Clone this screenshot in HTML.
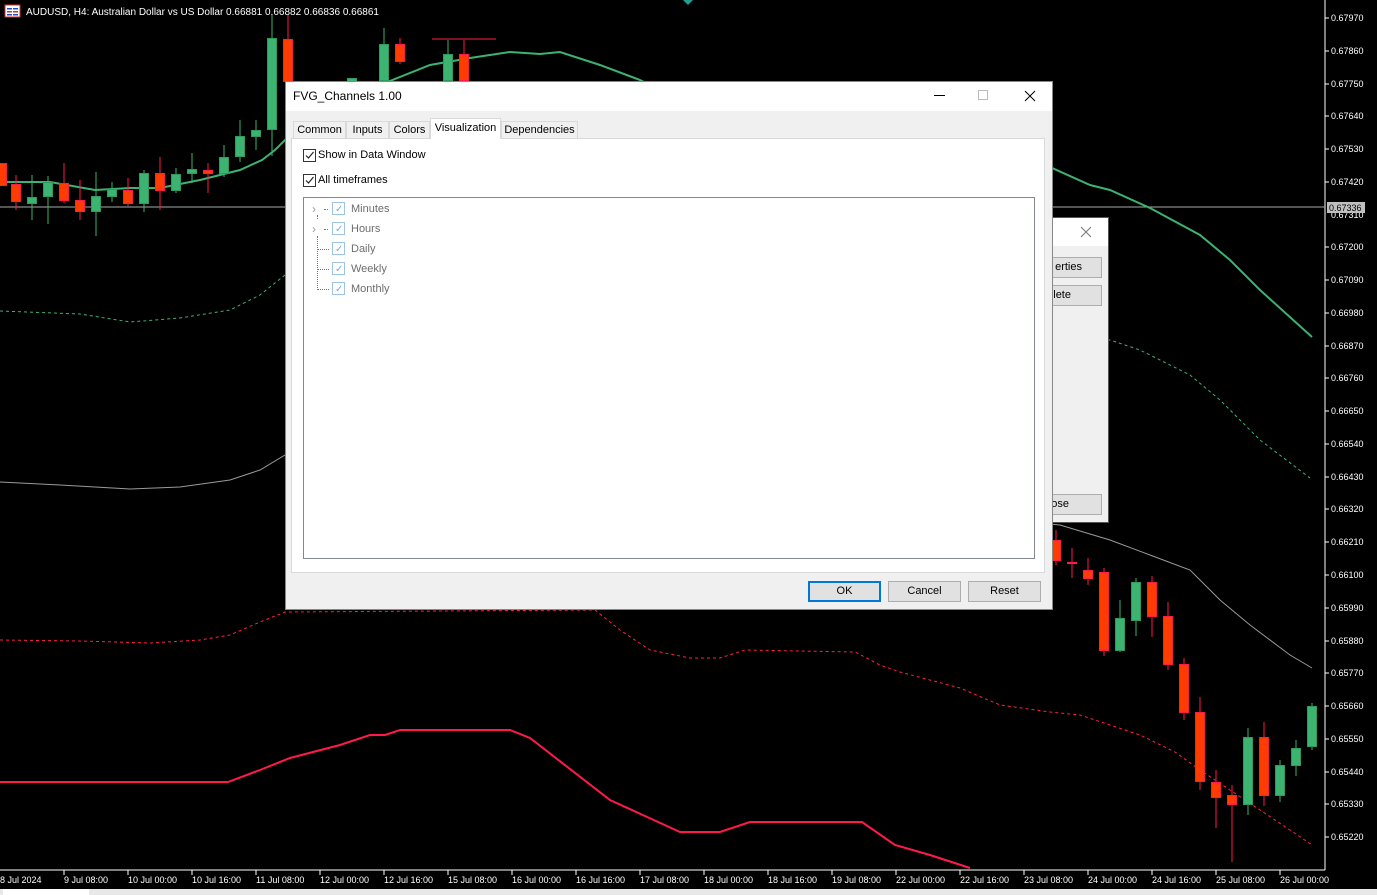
<!DOCTYPE html>
<html><head><meta charset="utf-8"><style>
*{margin:0;padding:0;box-sizing:border-box}
body{width:1377px;height:895px;background:#000;position:relative;overflow:hidden;font-family:"Liberation Sans",sans-serif}
svg{position:absolute;left:0;top:0}
.dlg{position:absolute;background:#f0f0f0;border:1px solid #888;font-size:11px;color:#000}
.btn{position:absolute;height:21px;background:#e1e1e1;border:1px solid #adadad;font-size:11px;text-align:center;line-height:19px}
.tab{position:absolute;top:121px;height:18px;border:1px solid #d9d9d9;border-bottom:none;background:#f0f0f0;font-size:11px;line-height:16px;text-align:center}
.cb{position:absolute;width:13px;height:13px;border:1px solid #333;background:#fff}
.cb2{position:absolute;width:13px;height:13px;border:1px solid #9dc3e6;background:#fff}
.gl{position:absolute;font-size:11px;color:#6d6d6d}
</style></head><body>
<svg width="1377" height="895" viewBox="0 0 1377 895">
<g font-family="Liberation Sans" font-size="9" fill="#fff">
<line x1="1325" y1="0" x2="1325" y2="870" stroke="#fff"/>
<line x1="0" y1="870" x2="1325" y2="870" stroke="#fff"/>
<line x1="0" y1="207" x2="1325" y2="207" stroke="#aaa"/>
<g stroke="#fff">
<line x1="1325" x2="1329" y1="18" y2="18"/><line x1="1325" x2="1329" y1="51" y2="51"/><line x1="1325" x2="1329" y1="84" y2="84"/><line x1="1325" x2="1329" y1="116" y2="116"/><line x1="1325" x2="1329" y1="149" y2="149"/><line x1="1325" x2="1329" y1="182" y2="182"/><line x1="1325" x2="1329" y1="247" y2="247"/><line x1="1325" x2="1329" y1="280" y2="280"/><line x1="1325" x2="1329" y1="313" y2="313"/><line x1="1325" x2="1329" y1="346" y2="346"/><line x1="1325" x2="1329" y1="378" y2="378"/><line x1="1325" x2="1329" y1="411" y2="411"/><line x1="1325" x2="1329" y1="444" y2="444"/><line x1="1325" x2="1329" y1="477" y2="477"/><line x1="1325" x2="1329" y1="509" y2="509"/><line x1="1325" x2="1329" y1="542" y2="542"/><line x1="1325" x2="1329" y1="575" y2="575"/><line x1="1325" x2="1329" y1="608" y2="608"/><line x1="1325" x2="1329" y1="641" y2="641"/><line x1="1325" x2="1329" y1="673" y2="673"/><line x1="1325" x2="1329" y1="706" y2="706"/><line x1="1325" x2="1329" y1="739" y2="739"/><line x1="1325" x2="1329" y1="772" y2="772"/><line x1="1325" x2="1329" y1="804" y2="804"/><line x1="1325" x2="1329" y1="837" y2="837"/>
</g>
<g>
<text x="1331" y="21">0.67970</text><text x="1331" y="54">0.67860</text><text x="1331" y="87">0.67750</text><text x="1331" y="119">0.67640</text><text x="1331" y="152">0.67530</text><text x="1331" y="185">0.67420</text><text x="1331" y="218">0.67310</text><text x="1331" y="250">0.67200</text><text x="1331" y="283">0.67090</text><text x="1331" y="316">0.66980</text><text x="1331" y="349">0.66870</text><text x="1331" y="381">0.66760</text><text x="1331" y="414">0.66650</text><text x="1331" y="447">0.66540</text><text x="1331" y="480">0.66430</text><text x="1331" y="512">0.66320</text><text x="1331" y="545">0.66210</text><text x="1331" y="578">0.66100</text><text x="1331" y="611">0.65990</text><text x="1331" y="644">0.65880</text><text x="1331" y="676">0.65770</text><text x="1331" y="709">0.65660</text><text x="1331" y="742">0.65550</text><text x="1331" y="775">0.65440</text><text x="1331" y="807">0.65330</text><text x="1331" y="840">0.65220</text>
</g>
<rect x="1327" y="202" width="38" height="11" fill="#c0c0c0"/><text x="1329" y="211" fill="#000">0.67336</text>
<g stroke="#fff">
<line x1="64" x2="64" y1="870" y2="875"/><line x1="128" x2="128" y1="870" y2="875"/><line x1="192" x2="192" y1="870" y2="875"/><line x1="256" x2="256" y1="870" y2="875"/><line x1="320" x2="320" y1="870" y2="875"/><line x1="384" x2="384" y1="870" y2="875"/><line x1="448" x2="448" y1="870" y2="875"/><line x1="512" x2="512" y1="870" y2="875"/><line x1="576" x2="576" y1="870" y2="875"/><line x1="640" x2="640" y1="870" y2="875"/><line x1="704" x2="704" y1="870" y2="875"/><line x1="768" x2="768" y1="870" y2="875"/><line x1="832" x2="832" y1="870" y2="875"/><line x1="896" x2="896" y1="870" y2="875"/><line x1="960" x2="960" y1="870" y2="875"/><line x1="1024" x2="1024" y1="870" y2="875"/><line x1="1088" x2="1088" y1="870" y2="875"/><line x1="1152" x2="1152" y1="870" y2="875"/><line x1="1216" x2="1216" y1="870" y2="875"/><line x1="1280" x2="1280" y1="870" y2="875"/>
</g>
<g>
<text x="0" y="883">8 Jul 2024</text><text x="64" y="883">9 Jul 08:00</text><text x="128" y="883">10 Jul 00:00</text><text x="192" y="883">10 Jul 16:00</text><text x="256" y="883">11 Jul 08:00</text><text x="320" y="883">12 Jul 00:00</text><text x="384" y="883">12 Jul 16:00</text><text x="448" y="883">15 Jul 08:00</text><text x="512" y="883">16 Jul 00:00</text><text x="576" y="883">16 Jul 16:00</text><text x="640" y="883">17 Jul 08:00</text><text x="704" y="883">18 Jul 00:00</text><text x="768" y="883">18 Jul 16:00</text><text x="832" y="883">19 Jul 08:00</text><text x="896" y="883">22 Jul 00:00</text><text x="960" y="883">22 Jul 16:00</text><text x="1024" y="883">23 Jul 08:00</text><text x="1088" y="883">24 Jul 00:00</text><text x="1152" y="883">24 Jul 16:00</text><text x="1216" y="883">25 Jul 08:00</text><text x="1280" y="883">26 Jul 00:00</text>
</g>
</g>
<rect x="0" y="889" width="1377" height="6" fill="#e8e8e8"/><rect x="3" y="889" width="86" height="6" fill="#fff"/>
<g fill="none">
<polyline stroke="#3cb371" stroke-width="2" points="0,182 50,182 95,190 130,188 160,188 200,180 240,170 262,160 275,150 285,140 330,110 380,85 430,65 470,58 510,52 540,54 560,52 600,65 640,80 680,100 1052,168 1090,185 1110,190 1150,208 1200,235 1230,260 1260,290 1312,337"/>
<polyline stroke="#3cb371" stroke-dasharray="3,3" points="0,311 80,314 130,322 180,318 230,310 260,295 285,275 1110,340 1140,350 1190,375 1220,400 1260,440 1310,478"/>
<polyline stroke="#9a9a9a" points="0,482 60,485 130,489 180,487 230,480 260,470 285,455 1060,525 1110,540 1150,555 1190,570 1220,600 1250,625 1290,655 1312,668"/>
<polyline stroke="#ff2040" stroke-dasharray="3,3" points="0,640 80,641 150,643 200,640 230,635 260,622 285,612 595,610 620,630 650,650 690,658 720,658 745,650 855,652 880,665 900,672 960,688 1000,705 1050,712 1080,715 1110,725 1140,735 1175,752 1200,770 1230,790 1260,810 1290,830 1312,845"/>
<polyline stroke="#ff1a4a" stroke-width="2" points="0,782 228,782 260,770 290,758 340,745 370,735 385,735 400,730 510,730 530,738 610,800 680,832 720,832 750,822 862,822 895,845 930,855 970,868"/>
<line x1="432" y1="39" x2="496" y2="39" stroke="#ff2040"/>
</g>
<g stroke-width="1">
<g stroke="#3cb371"><line x1="32" y1="175" x2="32" y2="220"/><line x1="48" y1="176" x2="48" y2="224"/><line x1="96" y1="172" x2="96" y2="236"/><line x1="112" y1="182" x2="112" y2="202"/><line x1="144" y1="170" x2="144" y2="212"/><line x1="176" y1="168" x2="176" y2="193"/><line x1="192" y1="153" x2="192" y2="183"/><line x1="224" y1="145" x2="224" y2="177"/><line x1="240" y1="120" x2="240" y2="162"/><line x1="256" y1="120" x2="256" y2="150"/><line x1="272" y1="14" x2="272" y2="156"/><line x1="384" y1="28" x2="384" y2="80"/><line x1="448" y1="40" x2="448" y2="80"/><line x1="1120" y1="600" x2="1120" y2="652"/><line x1="1136" y1="578" x2="1136" y2="636"/><line x1="1248" y1="728" x2="1248" y2="815"/><line x1="1280" y1="760" x2="1280" y2="802"/><line x1="1296" y1="740" x2="1296" y2="776"/><line x1="1312" y1="703" x2="1312" y2="750"/></g>
<g stroke="#ff1a4a"><line x1="16" y1="175" x2="16" y2="210"/><line x1="64" y1="163" x2="64" y2="203"/><line x1="80" y1="180" x2="80" y2="220"/><line x1="128" y1="178" x2="128" y2="206"/><line x1="160" y1="157" x2="160" y2="210"/><line x1="208" y1="163" x2="208" y2="193"/><line x1="288" y1="14" x2="288" y2="81"/><line x1="400" y1="38" x2="400" y2="64"/><line x1="464" y1="40" x2="464" y2="80"/><line x1="1056" y1="530" x2="1056" y2="565"/><line x1="1072" y1="548" x2="1072" y2="578"/><line x1="1088" y1="558" x2="1088" y2="585"/><line x1="1104" y1="568" x2="1104" y2="656"/><line x1="1152" y1="576" x2="1152" y2="637"/><line x1="1168" y1="602" x2="1168" y2="670"/><line x1="1184" y1="658" x2="1184" y2="720"/><line x1="1200" y1="697" x2="1200" y2="790"/><line x1="1216" y1="770" x2="1216" y2="828"/><line x1="1232" y1="785" x2="1232" y2="862"/><line x1="1264" y1="722" x2="1264" y2="806"/></g>
</g>
<g fill="#3cb371" stroke="#2e9a5e">
<rect x="27.5" y="197.5" width="9" height="6"/><rect x="43.5" y="182.5" width="9" height="14"/><rect x="91.5" y="196.5" width="9" height="15"/><rect x="107.5" y="189.5" width="9" height="7"/><rect x="139.5" y="173.5" width="9" height="30"/><rect x="171.5" y="174.5" width="9" height="16"/><rect x="187.5" y="169.5" width="9" height="4"/><rect x="219.5" y="157.5" width="9" height="16"/><rect x="235.5" y="136.5" width="9" height="20"/><rect x="251.5" y="130.5" width="9" height="6"/><rect x="267.5" y="38.5" width="9" height="91"/><rect x="347.5" y="78.5" width="9" height="3"/><rect x="379.5" y="44.5" width="9" height="36"/><rect x="443.5" y="54.5" width="9" height="26"/>
<rect x="1115.5" y="618.5" width="9" height="32"/><rect x="1131.5" y="582.5" width="9" height="38"/><rect x="1243.5" y="737.5" width="9" height="67"/><rect x="1275.5" y="765.5" width="9" height="30"/><rect x="1291.5" y="748.5" width="9" height="17"/><rect x="1307.5" y="706.5" width="9" height="40"/>
</g>
<g fill="#ff3c00" stroke="#ff1a4a">
<rect x="-4.5" y="163.5" width="11" height="22"/><rect x="11.5" y="184.5" width="9" height="17"/><rect x="59.5" y="183.5" width="9" height="17"/><rect x="75.5" y="200.5" width="9" height="11"/><rect x="123.5" y="190.5" width="9" height="13"/><rect x="155.5" y="173.5" width="9" height="17"/><rect x="203.5" y="170.5" width="9" height="3"/><rect x="283.5" y="39.5" width="9" height="42"/><rect x="395.5" y="44.5" width="9" height="17"/><rect x="459.5" y="54.5" width="9" height="26"/>
<rect x="1051.5" y="540.5" width="9" height="20"/><rect x="1067.5" y="562.5" width="9" height="1"/><rect x="1083.5" y="570.5" width="9" height="8"/><rect x="1099.5" y="572.5" width="9" height="78"/><rect x="1147.5" y="582.5" width="9" height="34"/><rect x="1163.5" y="616.5" width="9" height="48"/><rect x="1179.5" y="664.5" width="9" height="48"/><rect x="1195.5" y="712.5" width="9" height="69"/><rect x="1211.5" y="782.5" width="9" height="15"/><rect x="1227.5" y="795.5" width="9" height="9"/><rect x="1259.5" y="737.5" width="9" height="58"/>
</g>
<polygon points="683,0 693,0 688,5" fill="#20a090"/>
<rect x="5" y="5" width="15" height="12" fill="#fff" stroke="#d03030"/>
<rect x="7" y="8" width="5" height="1.5" fill="#2050c0"/><rect x="13" y="8" width="5" height="1.5" fill="#2050c0"/><rect x="7" y="11" width="5" height="1.5" fill="#d03030"/><rect x="13" y="11" width="5" height="1.5" fill="#d03030"/><rect x="7" y="14" width="5" height="1.5" fill="#2050c0"/><rect x="13" y="14" width="5" height="1.5" fill="#2050c0"/>
<text x="26" y="15" font-family="Liberation Sans" font-size="10" fill="#fff">AUDUSD, H4:  Australian Dollar vs US Dollar  0.66881 0.66882 0.66836 0.66861</text>
</svg>

<div class="dlg" style="left:1040px;top:217px;width:69px;height:306px;border-color:#555">
  <div style="position:absolute;left:0;top:0;width:100%;height:28px;background:#fff"></div>
  <svg style="left:39px;top:8px" width="12" height="12"><path d="M1 1L11 11M11 1L1 11" stroke="#777" stroke-width="1"/></svg>
  <div class="btn" style="left:0;top:39px;width:61px;text-align:right;padding-right:19px">erties</div>
  <div class="btn" style="left:0;top:67px;width:61px;text-align:right;padding-right:30px">lete</div>
  <div class="btn" style="left:0;top:276px;width:61px;text-align:right;padding-right:32px">ose</div>
</div>

<div class="dlg" style="left:285px;top:81px;width:768px;height:529px">
  <div style="position:absolute;left:0;top:0;width:766px;height:29px;background:#fff"></div>
  <div style="position:absolute;left:7px;top:7px;font-size:12px">FVG_Channels 1.00</div>
  <div style="position:absolute;left:648px;top:13px;width:11px;height:1px;background:#000"></div>
  <div style="position:absolute;left:692px;top:8px;width:10px;height:10px;border:1px solid #bbb"></div>
  <svg style="left:738px;top:8px" width="12" height="12"><path d="M1 1L11 11M11 1L1 11" stroke="#000" stroke-width="1"/></svg>
</div>
<div class="tab" style="left:293px;width:53px">Common</div>
<div class="tab" style="left:346px;width:43px">Inputs</div>
<div class="tab" style="left:389px;width:41px">Colors</div>
<div class="tab" style="left:430px;top:118px;height:21px;width:71px;background:#fff;line-height:18px;z-index:2">Visualization</div>
<div class="tab" style="left:501px;width:77px">Dependencies</div>
<div style="position:absolute;left:291px;top:138px;width:754px;height:435px;background:#fff;border:1px solid #d9d9d9"></div>
<div class="cb" style="left:303px;top:149px"></div>
<svg style="left:303px;top:149px" width="13" height="13"><path d="M3 6.5L5.5 9L10.5 3" stroke="#222" fill="none" stroke-width="1.2"/></svg>
<div style="position:absolute;left:318px;top:149px;font-size:11px">Show in Data Window</div>
<div class="cb" style="left:303px;top:174px"></div>
<svg style="left:303px;top:174px" width="13" height="13"><path d="M3 6.5L5.5 9L10.5 3" stroke="#222" fill="none" stroke-width="1.2"/></svg>
<div style="position:absolute;left:318px;top:174px;font-size:11px">All timeframes</div>
<div style="position:absolute;left:303px;top:197px;width:732px;height:362px;border:1px solid #828790;background:#fff"></div>
<div style="position:absolute;left:317px;top:236px;height:54px;border-left:1px dotted #777"></div>
<div style="position:absolute;left:317px;top:249px;width:12px;border-top:1px dotted #777"></div>
<div style="position:absolute;left:317px;top:269px;width:12px;border-top:1px dotted #777"></div>
<div style="position:absolute;left:317px;top:289px;width:12px;border-top:1px dotted #777"></div>
<div style="position:absolute;left:317px;top:215px;height:4px;border-left:1px dotted #777"></div>
<div class="gl" style="left:312px;top:202px;color:#999;font-size:12px">›</div>
<div class="gl" style="left:312px;top:222px;color:#999;font-size:12px">›</div>
<div style="position:absolute;left:324px;top:209px;width:4px;border-top:1px dotted #777"></div>
<div style="position:absolute;left:324px;top:229px;width:4px;border-top:1px dotted #777"></div>
<div class="cb2" style="left:332px;top:202px"></div><div class="cb2" style="left:332px;top:222px"></div><div class="cb2" style="left:332px;top:242px"></div><div class="cb2" style="left:332px;top:262px"></div><div class="cb2" style="left:332px;top:282px"></div>
<div style="position:absolute;left:335px;top:200px;font-size:10px;color:#7aa7d8;line-height:20px">✓<br>✓<br>✓<br>✓<br>✓</div>
<div class="gl" style="left:351px;top:203px">Minutes</div>
<div class="gl" style="left:351px;top:223px">Hours</div>
<div class="gl" style="left:351px;top:243px">Daily</div>
<div class="gl" style="left:351px;top:263px">Weekly</div>
<div class="gl" style="left:351px;top:283px">Monthly</div>
<div class="btn" style="left:808px;top:581px;width:73px;border:2px solid #0078d7;line-height:17px">OK</div>
<div class="btn" style="left:888px;top:581px;width:73px">Cancel</div>
<div class="btn" style="left:968px;top:581px;width:73px">Reset</div>
</body></html>
